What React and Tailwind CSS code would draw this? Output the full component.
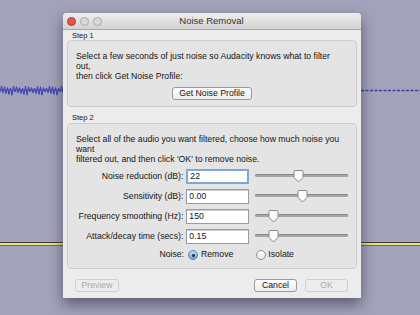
const sliders = [
  { label: "Noise reduction (dB):", value: "22", thumb: 38, focus: true },
  { label: "Sensitivity (dB):", value: "0.00", thumb: 42 },
  { label: "Frequency smoothing (Hz):", value: "150", thumb: 13 },
  { label: "Attack/decay time (secs):", value: "0.15", thumb: 13 },
];

function Wave() {
  const pts = [];
  for (let x = 0; x <= 63; x += 1.5) {
    const a = x % 3 === 0 ? 2 + ((x * 7) % 5) * 0.8 : -(1.5 + ((x * 5) % 4) * 0.7);
    pts.push(`${x},${90 + a}`);
  }
  return (
    <svg className="absolute left-0 top-0" width="420" height="315">
      <polyline points={pts.join(" ")} fill="none" stroke="#3b3fae" strokeWidth="1" />
      <line x1="0" y1="90" x2="63" y2="90" stroke="#4b4fba" strokeWidth="1.5" />
      <line x1="361" y1="90.5" x2="420" y2="90.5" stroke="#3a3d9e" strokeWidth="1.5" strokeDasharray="3 1.5" />
      <line x1="0" y1="242.5" x2="420" y2="242.5" stroke="#3d3d3d" strokeWidth="1" />
      <line x1="0" y1="244" x2="420" y2="244" stroke="#e8e27a" strokeWidth="2" />
      <line x1="0" y1="245.5" x2="420" y2="245.5" stroke="#6b6b5a" strokeWidth="1" />
    </svg>
  );
}

function Thumb() {
  return (
    <svg width="11" height="13" viewBox="0 0 11 13">
      <path d="M1 1.5 Q1 0.5 2 0.5 H9 Q10 0.5 10 1.5 V7.5 L5.5 12 L1 7.5 Z" fill="#fbfbfb" stroke="#8a8a8a" strokeWidth="1" />
    </svg>
  );
}

function Slider({ pos }) {
  return (
    <div className="relative h-[14px] w-[93px]">
      <div className="absolute left-0 right-0 top-[4px] h-[3px] rounded-full bg-[#a7a7a7] shadow-[inset_0_1px_0_#888]" />
      <div className="absolute top-0" style={{ left: pos }}>
        <Thumb />
      </div>
    </div>
  );
}

function MacButton({ children, disabled, className = "" }) {
  return (
    <button
      className={
        "h-[13px] rounded-[3px] border text-[8.7px] leading-[11px] " +
        className +
        " " +
        (disabled
          ? "border-[#cfcfcf] bg-[#ececec] text-[#a9a9a9]"
          : "border-[#9a9a9a] bg-gradient-to-b from-[#ffffff] to-[#ececec] text-[#111]")
      }
    >
      {children}
    </button>
  );
}

export default function App() {
  return (
    <div
      className="relative h-[315px] w-[420px] overflow-hidden bg-[#a2a3ba] text-[#141414]"
      style={{ fontFamily: '"Liberation Sans", Arial, sans-serif' }}
    >
      <Wave />
      <div className="relative ml-[63px] pt-[13px]">
        <div className="flex h-[285px] w-[298px] flex-col rounded-t-[4px] bg-[#ececec] shadow-[0_6px_14px_rgba(30,30,50,0.55)]">
          <div className="flex h-[17px] items-center rounded-t-[4px] border-b border-[#a8a8a8] bg-gradient-to-b from-[#eeeeee] to-[#d2d2d2] px-[4px]">
            <div className="flex gap-[4px]">
              <span className="h-[9px] w-[9px] rounded-full border border-[#b53a33] bg-[#e0554b]" />
              <span className="h-[9px] w-[9px] rounded-full border border-[#a9a9a9] bg-[#d8d8d8]" />
              <span className="h-[9px] w-[9px] rounded-full border border-[#a9a9a9] bg-[#d8d8d8]" />
            </div>
            <div className="flex-1 pr-[36px] text-center text-[9.5px] text-[#333]">Noise Removal</div>
          </div>

          <div className="px-[4px]">
            <div className="h-[10px] pl-[5px] pt-[1px] text-[7.5px] leading-[9px]">Step 1</div>
            <div className="flex h-[67px] flex-col rounded-[4px] border border-[#cdcdcd] bg-[#e4e4e4] px-[8px] pt-[10px]">
              <p className="whitespace-nowrap text-[8.7px] leading-[10px]">
                Select a few seconds of just noise so Audacity knows what to filter
                <br />
                out,
                <br />
                then click Get Noise Profile:
              </p>
              <div className="mt-[6px] flex justify-center">
                <MacButton className="w-[80px]">Get Noise Profile</MacButton>
              </div>
            </div>

            <div className="mt-[6px] h-[10px] pl-[5px] text-[7.5px] leading-[9px]">Step 2</div>
            <div className="flex h-[146px] flex-col rounded-[4px] border border-[#cdcdcd] bg-[#e4e4e4] px-[8px] pt-[10px]">
              <p className="whitespace-nowrap text-[8.7px] leading-[10px]">
                Select all of the audio you want filtered, choose how much noise you
                <br />
                want
                <br />
                filtered out, and then click 'OK' to remove noise.
              </p>
              <div className="mt-[5px] flex flex-col gap-[5px]">
                {sliders.map((s) => (
                  <div key={s.label} className="flex h-[15px] items-center">
                    <div className="w-[108px] whitespace-nowrap text-right text-[8.7px]">{s.label}</div>
                    <div
                      className={
                        "ml-[3px] flex h-[15px] w-[63px] items-center bg-white pl-[2px] text-[8.7px] " +
                        (s.focus
                          ? "border-2 border-[#7fa8d6]"
                          : "border border-[#9c9c9c] shadow-[inset_0_1px_0_#ccc]")
                      }
                    >
                      {s.value}
                    </div>
                    <div className="ml-[6px]">
                      <Slider pos={s.thumb} />
                    </div>
                  </div>
                ))}
                <div className="flex h-[12px] items-center text-[8.7px]">
                  <div className="w-[108px] text-right">Noise:</div>
                  <div className="ml-[4px] flex items-center gap-[3px]">
                    <span className="flex h-[10px] w-[10px] items-center justify-center rounded-full border border-[#5a7fb0] bg-gradient-to-b from-[#c3dcf5] to-[#6fa2de]">
                      <span className="h-[3px] w-[3px] rounded-full bg-[#1b2a44]" />
                    </span>
                    Remove
                  </div>
                  <div className="ml-[23px] flex items-center gap-[2px]">
                    <span className="h-[10px] w-[10px] rounded-full border border-[#8e8e8e] bg-gradient-to-b from-[#ffffff] to-[#e6e6e6]" />
                    Isolate
                  </div>
                </div>
              </div>
            </div>

            <div className="mt-[10px] flex items-center pl-[8px] pr-[9px]">
              <MacButton disabled className="w-[44px]">Preview</MacButton>
              <div className="flex-1" />
              <div className="flex gap-[8px]">
                <MacButton className="w-[43px]">Cancel</MacButton>
                <MacButton disabled className="w-[43px]">OK</MacButton>
              </div>
            </div>
          </div>
        </div>
      </div>
    </div>
  );
}
